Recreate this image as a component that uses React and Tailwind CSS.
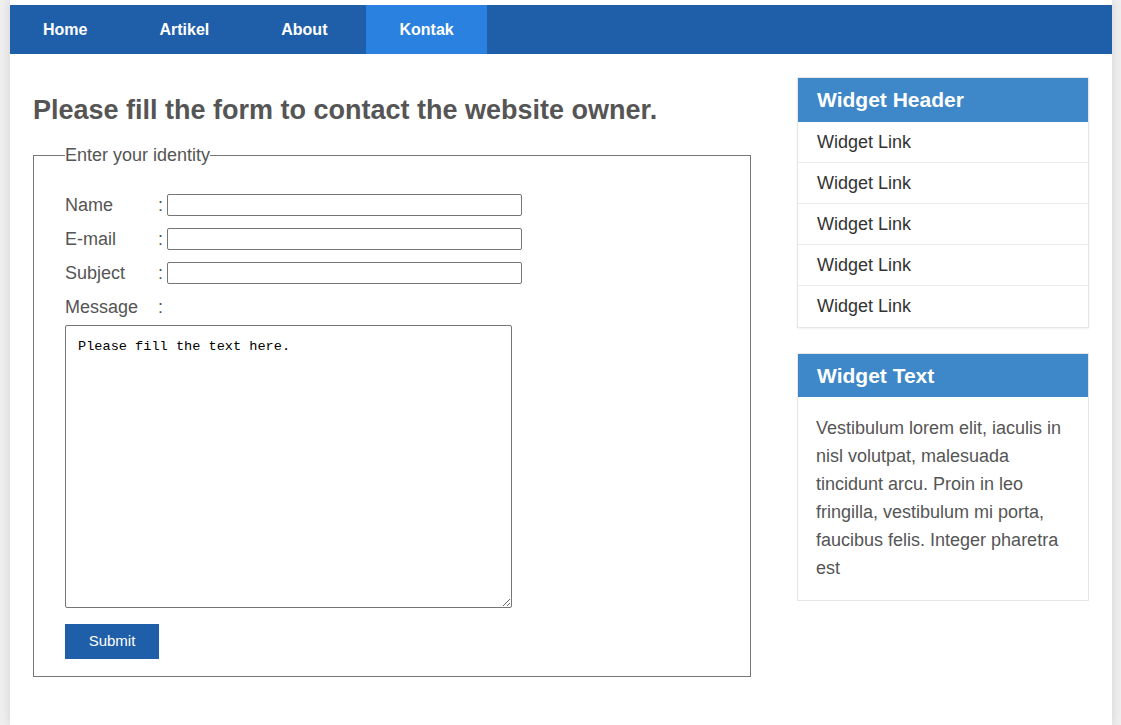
import { useState } from "react"

const navItems = ["Home", "Artikel", "About", "Kontak"]

const FormRow = ({ label, name, value, onChange }) => (
    <div className="flex items-center h-[22px] mb-3">
        <label className="w-[93px] text-[18px] text-[#555]">{label}</label>
        <span className="w-[9px] text-[18px] text-[#555]">:</span>
        <input
            type="text"
            name={name}
            value={value}
            onChange={onChange}
            className="w-[355px] h-[22px] border border-[#767676] rounded-[2px] bg-white px-1 text-[13px] outline-none"
        />
    </div>
)

const App = () => {
    const [formData, setFormData] = useState({ name: "", email: "", subject: "" })
    const [message, setMessage] = useState("Please fill the text here.")

    const handleChange = (e) => {
        setFormData({ ...formData, [e.target.name]: e.target.value })
    }

    return (
        <div className="min-h-[725px] bg-[#efefef] font-['Liberation_Sans',Arial,sans-serif]">
            <div className="ml-[10px] w-[1102px] min-h-[725px] bg-white pt-[5px] shadow-[0_0_10px_rgba(0,0,0,0.12)]">

                {/* NAV */}
                <nav className="flex gap-[6px] h-[49px] bg-[#1f5fa9]">
                    {navItems.map((item) => (
                        <a
                            key={item}
                            href="#"
                            className={`flex items-center px-[33px] text-[16px] font-bold text-white ${item === "Kontak" ? "bg-[#2b81e0]" : ""}`}
                        >
                            {item}
                        </a>
                    ))}
                </nav>

                <div className="flex px-[23px] pt-[23px] pb-[40px]">

                    {/* MAIN */}
                    <div className="w-[718px]">
                        <h1 className="mt-[18px] mb-[20px] text-[27px] leading-[30px] font-bold text-[#555]">
                            Please fill the form to contact the website owner.
                        </h1>

                        <fieldset className="border border-[#777] px-[31px] pt-[29px] pb-[17px]">
                            <legend className="text-[18px] leading-[20px] text-[#555] px-0">Enter your identity</legend>

                            <FormRow label="Name" name="name" value={formData.name} onChange={handleChange} />
                            <FormRow label="E-mail" name="email" value={formData.email} onChange={handleChange} />
                            <FormRow label="Subject" name="subject" value={formData.subject} onChange={handleChange} />

                            <div className="flex items-center h-[22px]">
                                <span className="w-[93px] text-[18px] text-[#555]">Message</span>
                                <span className="w-[9px] text-[18px] text-[#555]">:</span>
                            </div>

                            <textarea
                                value={message}
                                onChange={(e) => setMessage(e.target.value)}
                                className="block mt-[7px] w-[447px] h-[283px] border border-[#767676] rounded-[2px] px-[12px] py-[12px] text-[13.6px] leading-[17px] text-black font-['Liberation_Mono',monospace] outline-none"
                            />

                            <button
                                type="submit"
                                className="mt-[16px] w-[94px] h-[35px] bg-[#1f5fa9] text-white text-[15px]"
                            >
                                Submit
                            </button>
                        </fieldset>
                    </div>

                    {/* SIDEBAR */}
                    <aside className="ml-[46px] w-[292px]">
                        <div className="border border-[#e6e6e6] shadow-[0_1px_2px_rgba(0,0,0,0.06)]">
                            <h3 className="h-[44px] flex items-center px-[19px] bg-[#3e87c8] text-white text-[21px] font-bold">
                                Widget Header
                            </h3>
                            {[1, 2, 3, 4, 5].map((i) => (
                                <a
                                    key={i}
                                    href="#"
                                    className={`flex items-center h-[41px] px-[19px] text-[18px] text-[#333] ${i < 5 ? "border-b border-[#ebebeb]" : ""}`}
                                >
                                    Widget Link
                                </a>
                            ))}
                        </div>

                        <div className="mt-[25px] border border-[#e6e6e6]">
                            <h3 className="h-[43px] flex items-center px-[19px] bg-[#3e87c8] text-white text-[21px] font-bold">
                                Widget Text
                            </h3>
                            <p className="px-[18px] pt-[17px] pb-[18px] text-[18px] leading-[28px] text-[#555]">
                                Vestibulum lorem elit, iaculis in nisl volutpat, malesuada tincidunt arcu. Proin in leo fringilla, vestibulum mi porta, faucibus felis. Integer pharetra est
                            </p>
                        </div>
                    </aside>

                </div>
            </div>
        </div>
    )
}

export default App
